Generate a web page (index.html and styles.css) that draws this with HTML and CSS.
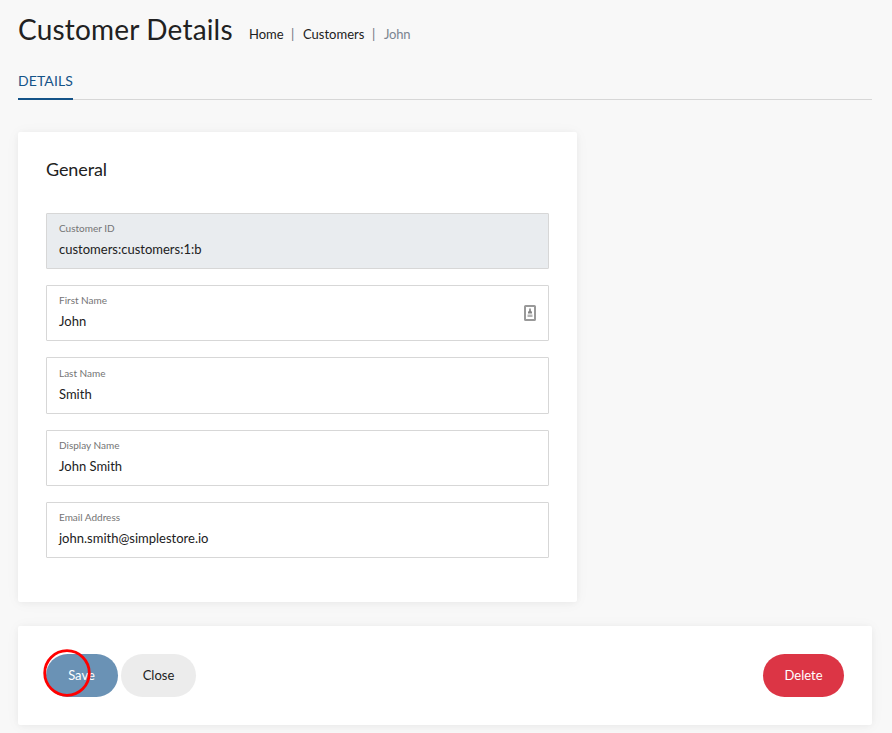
FILE: index.html
```html
<!DOCTYPE html>
<html lang="en">
<head>
<meta charset="utf-8">
<title>Customer Details</title>
<link rel="stylesheet" href="styles.css">
</head>
<body>
<main class="page">
  <header class="heading">
    <h1 class="title">Customer Details</h1>
    <nav class="breadcrumb">
      <a class="crumb crumb-home" href="#">Home</a>
      <span class="divider">|</span>
      <a class="crumb crumb-customers" href="#">Customers</a>
      <span class="divider">|</span>
      <span class="crumb current">John</span>
    </nav>
  </header>
  <nav class="tabs"><a class="tab" href="#">DETAILS</a></nav>
  <section class="card general">
    <h2 class="card-title">General</h2>
    <div class="fields">
      <div class="field disabled"><span class="label">Customer ID</span><span class="value">customers:customers:1:b</span></div>
      <div class="field"><span class="label">First Name</span><span class="value">John</span>
        <svg class="autofill" width="12" height="16" viewBox="0 0 12 16"><rect x="1" y="1" width="10" height="14" rx="0.6" fill="#fff" stroke="#999" stroke-width="2"/><path d="M5.2 3.500h1.600v2L8 7v1.500H4V7l1.200-1.500z" fill="#858585"/><path d="M3.500 9.500h5v2.500h-5z" fill="#b4b4b4"/></svg>
      </div>
      <div class="field"><span class="label">Last Name</span><span class="value">Smith</span></div>
      <div class="field"><span class="label">Display Name</span><span class="value">John Smith</span></div>
      <div class="field"><span class="label">Email Address</span><span class="value">john.smith@simplestore.io</span></div>
    </div>
  </section>
  <section class="card actions">
    <button class="button save">Save
      <svg class="ring" width="48" height="48" viewBox="0 0 48 48"><circle cx="24" cy="24" r="22.300" fill="none" stroke="#ff0000" stroke-width="2.800"/></svg>
    </button>
    <button class="button close">Close</button>
    <button class="button delete">Delete</button>
  </section>
</main>
</body>
</html>
```

FILE: styles.css
```css
* { box-sizing: border-box; }
body {
  margin: 0;
  height: 733px;
  overflow: hidden;
  background: #f8f8f8;
  color: #212121;
  font: 400 13px/20px Lato, sans-serif;
}
a { color: inherit; text-decoration: none; }
.page { width: 872px; padding-left: 18px; }
.heading { display: flex; height: 66px; }
.title { margin: 8px 16px 0 0; width: 215px; font-size: 28px; line-height: 42px; font-weight: 400; letter-spacing: 0.18px; white-space: nowrap; }
.breadcrumb { display: flex; padding-top: 24px; }
.crumb { white-space: nowrap; }
.crumb-home { width: 35px; }
.crumb-customers { width: 62px; }
.divider { width: 19px; padding-left: 7px; color: #6c757d; }
.current { color: #7b8490; letter-spacing: -0.2px; }
.tabs { display: flex; height: 34px; border-bottom: 1px solid #d7d7d7; }
.tab { width: 55px; height: 34px; padding-top: 5px; border-bottom: 2px solid #145388; color: #145388; font-size: 14px; letter-spacing: 0.1px; white-space: nowrap; }
.card { background: #fff; border-radius: 2px; box-shadow: 0 1px 15px rgba(0,0,0,.04), 0 1px 6px rgba(0,0,0,.04); }
.general { width: 559px; height: 470px; margin-top: 32px; padding: 24px 28px 0; }
.card-title { margin: 0 0 31px; font-size: 18px; line-height: 26px; font-weight: 400; letter-spacing: -0.1px; }
.fields { display: flex; flex-direction: column; gap: 16px; }
.field { position: relative; display: flex; flex-direction: column; height: 56.2px; padding: 7.15px 12px 0; border: 1px solid #d7d7d7; border-radius: 1px; }
.disabled { background: #e9ecef; }
.label { font-size: 10px; line-height: 15px; color: #747474; }
.value { line-height: 20px; margin-top: 3px; }
.autofill { position: absolute; right: 12px; top: 19px; }
.actions { display: flex; align-items: flex-start; gap: 3px; height: 99px; margin-top: 24px; padding: 28px; }
.button { position: relative; height: 43px; padding: 0 0 2px; border: 0; border-radius: 22px; font: inherit; }
.save { width: 72px; padding-right: 1px; background: #6a92b5; color: #fff; }
.close { width: 75px; background: #ececec; color: #212121; }
.delete { width: 81px; margin-left: auto; background: #dc3545; color: #fff; }
.ring { position: absolute; left: -3px; top: -5px; }
```
